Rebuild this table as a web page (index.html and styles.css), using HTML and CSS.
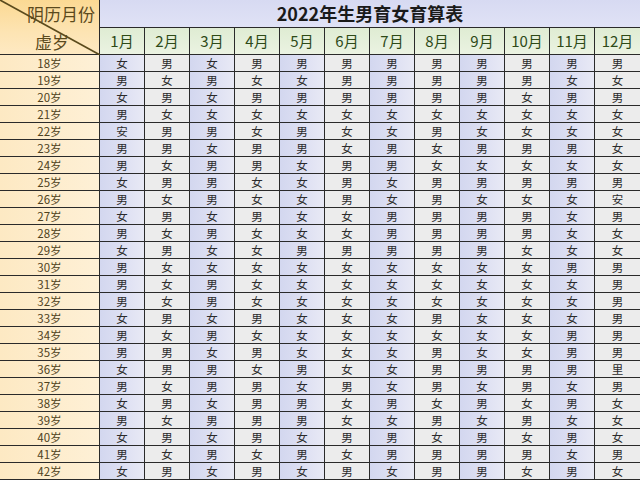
FILE: index.html
```html
<!DOCTYPE html>
<html lang="zh-CN">
<head>
<meta charset="utf-8">
<title>2022年生男育女育算表</title>
<link rel="stylesheet" href="styles.css">
</head>
<body>
<div class="sheet">
  <div class="head">
    <div class="corner">
      <svg class="diag" width="100" height="55" viewBox="0 0 100 55"><line x1="0" y1="0" x2="100" y2="55" stroke="#5a4a1c" stroke-width="1.6"/></svg>
      <span class="ctop">阴历月份</span>
      <span class="cbottom">虚岁</span>
    </div>
    <div class="head-right">
      <div class="title">2022年生男育女育算表</div>
      <div class="months">
        <div>1月</div><div>2月</div><div>3月</div><div>4月</div><div>5月</div><div>6月</div>
        <div>7月</div><div>8月</div><div>9月</div><div>10月</div><div>11月</div><div>12月</div>
      </div>
    </div>
  </div>
  <div class="row"><div class="age">18岁</div><div>女</div><div>男</div><div>女</div><div>男</div><div>男</div><div>男</div><div>男</div><div>男</div><div>男</div><div>男</div><div>男</div><div>男</div></div>
  <div class="row"><div class="age">19岁</div><div>男</div><div>女</div><div>男</div><div>女</div><div>女</div><div>男</div><div>男</div><div>男</div><div>男</div><div>男</div><div>女</div><div>女</div></div>
  <div class="row"><div class="age">20岁</div><div>女</div><div>男</div><div>女</div><div>男</div><div>男</div><div>男</div><div>男</div><div>男</div><div>男</div><div>女</div><div>男</div><div>男</div></div>
  <div class="row"><div class="age">21岁</div><div>男</div><div>女</div><div>女</div><div>女</div><div>女</div><div>女</div><div>女</div><div>女</div><div>女</div><div>女</div><div>女</div><div>女</div></div>
  <div class="row"><div class="age">22岁</div><div>安</div><div>男</div><div>男</div><div>女</div><div>男</div><div>女</div><div>女</div><div>男</div><div>女</div><div>女</div><div>女</div><div>女</div></div>
  <div class="row"><div class="age">23岁</div><div>男</div><div>男</div><div>女</div><div>男</div><div>男</div><div>女</div><div>男</div><div>女</div><div>男</div><div>男</div><div>男</div><div>女</div></div>
  <div class="row"><div class="age">24岁</div><div>男</div><div>女</div><div>男</div><div>男</div><div>女</div><div>男</div><div>男</div><div>女</div><div>女</div><div>女</div><div>女</div><div>女</div></div>
  <div class="row"><div class="age">25岁</div><div>女</div><div>男</div><div>男</div><div>女</div><div>女</div><div>男</div><div>女</div><div>男</div><div>男</div><div>男</div><div>男</div><div>男</div></div>
  <div class="row"><div class="age">26岁</div><div>男</div><div>女</div><div>男</div><div>女</div><div>女</div><div>男</div><div>女</div><div>男</div><div>女</div><div>女</div><div>女</div><div>安</div></div>
  <div class="row"><div class="age">27岁</div><div>女</div><div>男</div><div>女</div><div>男</div><div>女</div><div>女</div><div>男</div><div>男</div><div>男</div><div>男</div><div>女</div><div>男</div></div>
  <div class="row"><div class="age">28岁</div><div>男</div><div>女</div><div>男</div><div>女</div><div>女</div><div>女</div><div>男</div><div>男</div><div>男</div><div>男</div><div>女</div><div>女</div></div>
  <div class="row"><div class="age">29岁</div><div>女</div><div>男</div><div>女</div><div>女</div><div>男</div><div>男</div><div>男</div><div>男</div><div>男</div><div>女</div><div>女</div><div>女</div></div>
  <div class="row"><div class="age">30岁</div><div>男</div><div>女</div><div>女</div><div>女</div><div>女</div><div>女</div><div>女</div><div>女</div><div>女</div><div>女</div><div>男</div><div>男</div></div>
  <div class="row"><div class="age">31岁</div><div>男</div><div>女</div><div>男</div><div>女</div><div>女</div><div>女</div><div>女</div><div>女</div><div>女</div><div>女</div><div>女</div><div>男</div></div>
  <div class="row"><div class="age">32岁</div><div>男</div><div>女</div><div>男</div><div>女</div><div>女</div><div>女</div><div>女</div><div>女</div><div>女</div><div>女</div><div>女</div><div>男</div></div>
  <div class="row"><div class="age">33岁</div><div>女</div><div>男</div><div>女</div><div>男</div><div>女</div><div>女</div><div>女</div><div>男</div><div>女</div><div>女</div><div>女</div><div>男</div></div>
  <div class="row"><div class="age">34岁</div><div>男</div><div>女</div><div>男</div><div>女</div><div>女</div><div>女</div><div>女</div><div>女</div><div>女</div><div>女</div><div>男</div><div>男</div></div>
  <div class="row"><div class="age">35岁</div><div>男</div><div>男</div><div>女</div><div>男</div><div>女</div><div>女</div><div>女</div><div>男</div><div>女</div><div>女</div><div>男</div><div>男</div></div>
  <div class="row"><div class="age">36岁</div><div>女</div><div>男</div><div>男</div><div>女</div><div>男</div><div>女</div><div>女</div><div>男</div><div>男</div><div>男</div><div>男</div><div>里</div></div>
  <div class="row"><div class="age">37岁</div><div>男</div><div>女</div><div>男</div><div>男</div><div>女</div><div>男</div><div>女</div><div>男</div><div>女</div><div>男</div><div>女</div><div>男</div></div>
  <div class="row"><div class="age">38岁</div><div>女</div><div>男</div><div>女</div><div>男</div><div>男</div><div>女</div><div>男</div><div>女</div><div>男</div><div>女</div><div>男</div><div>女</div></div>
  <div class="row"><div class="age">39岁</div><div>男</div><div>女</div><div>男</div><div>男</div><div>男</div><div>女</div><div>女</div><div>男</div><div>女</div><div>男</div><div>女</div><div>女</div></div>
  <div class="row"><div class="age">40岁</div><div>女</div><div>男</div><div>女</div><div>男</div><div>女</div><div>男</div><div>男</div><div>女</div><div>男</div><div>女</div><div>男</div><div>女</div></div>
  <div class="row"><div class="age">41岁</div><div>男</div><div>女</div><div>男</div><div>女</div><div>男</div><div>女</div><div>男</div><div>男</div><div>男</div><div>男</div><div>女</div><div>男</div></div>
  <div class="row"><div class="age">42岁</div><div>女</div><div>男</div><div>女</div><div>男</div><div>女</div><div>男</div><div>女</div><div>男</div><div>男</div><div>女</div><div>男</div><div>女</div></div>
</div>
</body>
</html>
```

FILE: styles.css
```css
* { box-sizing: border-box; }
html, body { margin: 0; padding: 0; background: #ffffff; }
body {
  font-family: "Noto Sans CJK SC", "Noto Sans", sans-serif;
  width: 640px;
  height: 480px;
  overflow: hidden;
}
.sheet {
  width: 640px;
  display: flex;
  flex-direction: column;
}
.head {
  display: flex;
  height: 55px;
}
.corner {
  position: relative;
  width: 100px;
  height: 55px;
  background: linear-gradient(180deg, #fbd993 0%, #fde4b3 60%, #fee9c2 100%);
  border-right: 1px solid #2a2a2a;
  border-bottom: 1px solid #2a2a2a;
  color: #5b4a1d;
  font-size: 17px;
  line-height: 1;
}
.diag {
  position: absolute;
  left: 0;
  top: 0;
}
.ctop {
  position: absolute;
  right: 4px;
  top: 5px;
}
.cbottom {
  position: absolute;
  left: 35px;
  top: 33px;
}
.head-right {
  flex: 1;
  display: flex;
  flex-direction: column;
}
.title {
  height: 28px;
  background: linear-gradient(180deg, #d7daf2 0%, #e0e2f6 100%);
  border-bottom: 1px solid #2a2a2a;
  text-align: center;
  font-weight: bold;
  font-size: 18px;
  line-height: 27px;
  color: #1a1a1a;
}
.months {
  height: 27px;
  display: grid;
  grid-template-columns: repeat(12, 45px);
}
.months > div {
  border-right: 1px solid #2a2a2a;
  border-bottom: 1px solid #2a2a2a;
  background: linear-gradient(180deg, #dfecd3 0%, #ebf3e2 100%);
  color: #2e4a18;
  font-size: 15px;
  line-height: 25px;
  text-align: center;
}
.months > div:last-child { border-right: 0; }
.row {
  display: grid;
  grid-template-columns: 100px repeat(12, 45px);
  height: 17px;
}
.row > div {
  border-right: 1px solid #2a2a2a;
  border-bottom: 1px solid #2a2a2a;
  text-align: center;
  font-size: 11.5px;
  line-height: 16px;
  color: #2b2b2b;
  background: #ececec;
}
.row > div:last-child { border-right: 0; }
.row > div:nth-child(even) {
  background: linear-gradient(90deg, #d3d7ef 0%, #dfe1f3 60%, #e8e9f5 100%);
}
.row > .age {
  background: linear-gradient(90deg, #fde9c3 0%, #fef0d6 100%);
  color: #4f4221;
}
```
